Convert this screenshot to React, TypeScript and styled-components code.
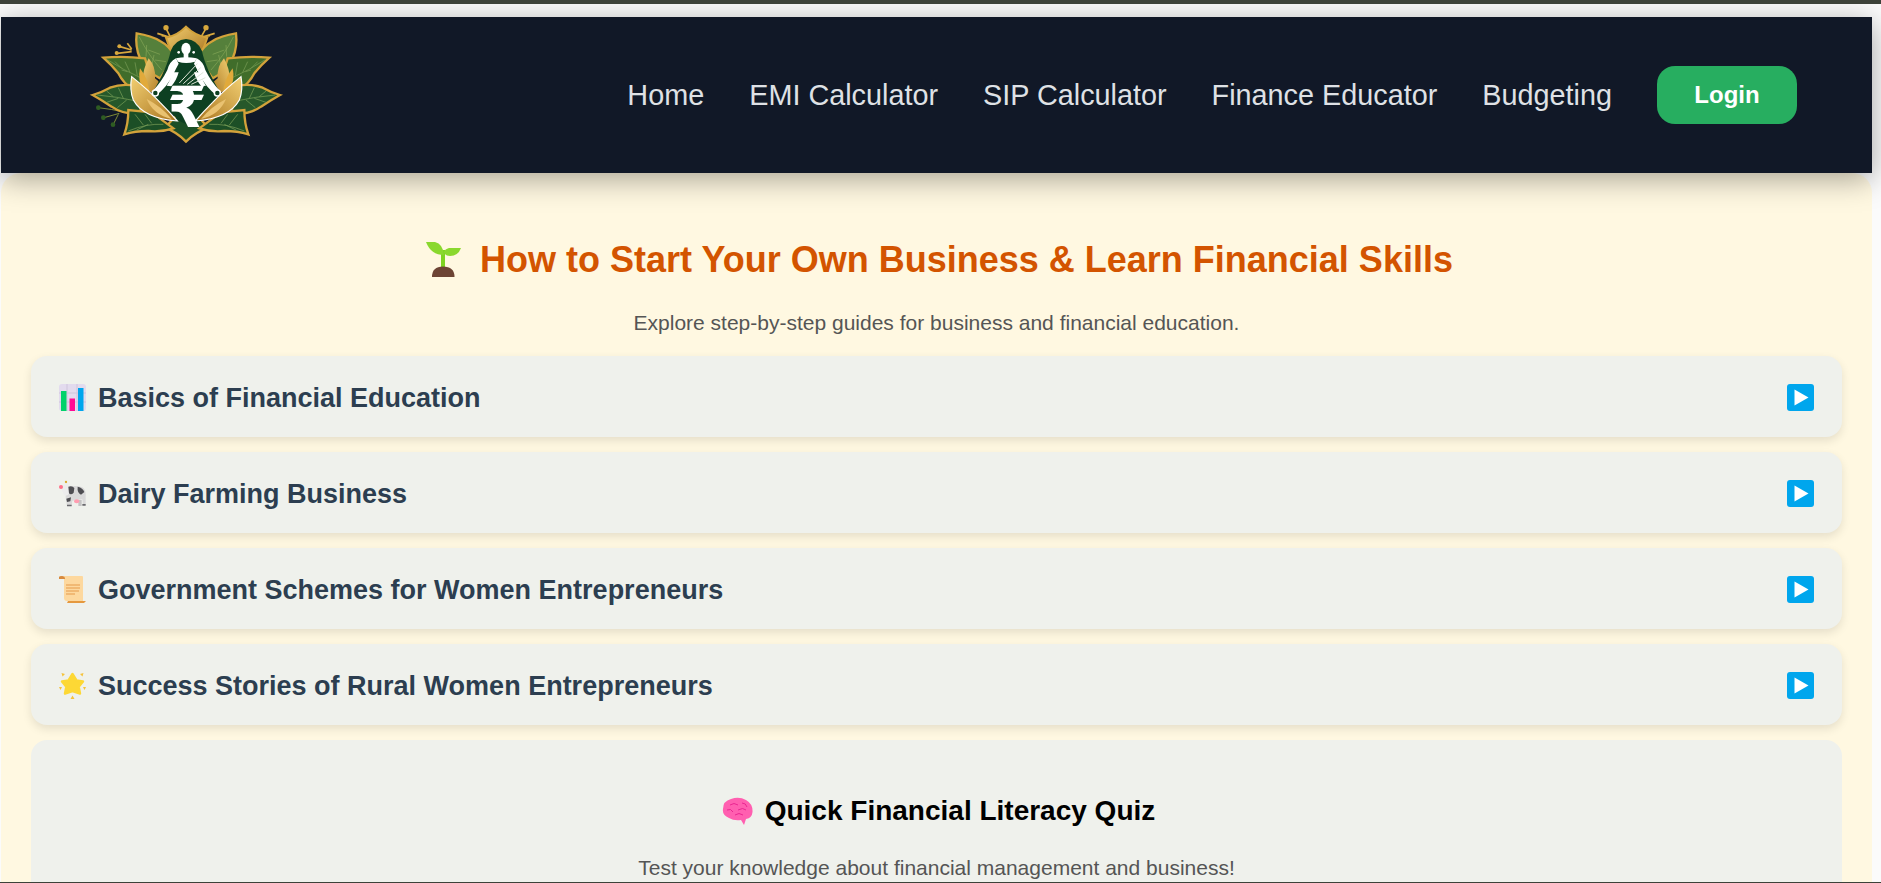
import React from 'react'
import styled, { createGlobalStyle } from 'styled-components'

const GlobalStyle = createGlobalStyle`
  html, body {
    margin: 0;
    padding: 0;
    height: 100%;
    overflow: hidden;
  }
  body {
    font-family: "Liberation Sans", Arial, sans-serif;
  }
`

// one side of the lotus, mirrored for the other side
const HalfLotus = () => (
  <g>
    {/* upper petal */}
    <path d="M170 55 Q215 62 240 78 Q268 92 285 125 L240 190 Q200 170 180 130 Q165 95 170 55 Z" fill="#54803a" stroke="#d3a23a" strokeWidth="7" />
    <path d="M178 66 Q205 120 245 165 M200 90 L198 125 M222 120 L216 150 M205 105 L240 118 M225 135 L258 140" fill="none" stroke="#86a659" strokeWidth="2" />
    {/* side petal */}
    <path d="M70 128 Q130 122 195 130 L215 195 L160 225 Q130 205 115 175 Q95 150 70 128 Z" fill="#3f6d2c" stroke="#d3a23a" strokeWidth="7" />
    <path d="M82 134 Q130 165 185 190 M105 140 L125 160 M135 140 L150 172 M165 142 L172 182 M125 165 L142 170" fill="none" stroke="#7d9e55" strokeWidth="2" />
    {/* low petal */}
    <path d="M38 240 Q65 232 90 218 Q125 205 165 212 L185 296 Q130 300 95 275 Q65 255 38 240 Z" fill="#26592a" stroke="#d3a23a" strokeWidth="7" />
    <path d="M52 240 Q110 245 170 258 M80 228 L100 245 M115 218 L130 250 M80 262 L115 250 M112 278 L140 255" fill="none" stroke="#7da35a" strokeWidth="2" />
    {/* bottom petal */}
    <path d="M133 358 Q145 325 145 285 L215 292 L280 340 Q245 352 205 348 Q165 348 133 358 Z" fill="#1f4f26" stroke="#d3a23a" strokeWidth="7" />
    <path d="M145 348 Q200 325 250 328 M165 298 L190 330 M195 298 L215 325 M170 345 L205 328" fill="none" stroke="#7da35a" strokeWidth="2" />
    {/* flame petals */}
    <path d="M206 130 Q228 155 225 190 Q250 205 245 245 L210 230 Q170 200 206 130 Z" fill="url(#logoGold)" />
    <path d="M180 160 Q205 190 210 240 L190 225 Q172 195 180 160 Z" fill="#e1aa3b" />
  </g>
)

// parts that lie over the dark centre
const HalfFigure = () => (
  <g>
    <path d="M155 185 Q205 225 240 262 Q268 290 292 318 Q190 310 160 255 Q148 225 155 185 Z" fill="url(#logoGold)" stroke="#fff" strokeWidth="3.5" />
    <path d="M200 252 Q245 275 275 312 Q220 300 200 252 Z" fill="#e9c271" />
    <path d="M288 130 Q268 140 262 165 Q245 200 218 228 L230 240 Q262 215 280 178 Q288 160 296 146 Z" fill="#fff" />
    <path d="M272 172 Q276 190 260 212 L274 214 Q290 195 296 172 Z" fill="#fff" />
    <circle cx="226" cy="234" r="9" fill="#0f4020" stroke="#fff" strokeWidth="4.5" />
  </g>
)

const BrandMark = () => (
  <svg width="210" height="130" viewBox="0 6 630 390" aria-label="logo">
    <defs>
      <linearGradient id="logoGold" x1="0" y1="0" x2="1" y2="1">
        <stop offset="0" stopColor="#f2cf72" />
        <stop offset="1" stopColor="#a8731e" />
      </linearGradient>
      <filter id="logoSoft">
        <feGaussianBlur stdDeviation="1" />
      </filter>
    </defs>
    <g filter="url(#logoSoft)">
      {/* sprigs */}
      <g stroke="#d8a83e" strokeWidth="5" fill="none">
        <path d="M272 68 L258 40 M272 68 L232 55 M272 66 L245 62" />
        <path d="M362 68 L378 40 M362 68 L404 55 M362 66 L390 62" />
        <path d="M155 110 L112 115 M155 105 L120 95 M155 102 L142 85" />
      </g>
      <circle cx="258" cy="38" r="8" fill="#d8a83e" />
      <circle cx="378" cy="38" r="8" fill="#d8a83e" />
      <circle cx="110" cy="114" r="6" fill="#d8a83e" />
      <circle cx="118" cy="94" r="6" fill="#d8a83e" />
      <g stroke="#7d8a35" strokeWidth="3" fill="none">
        <path d="M135 292 Q95 282 55 278 M118 295 L72 308 M115 298 L100 328" />
      </g>
      <circle cx="55" cy="278" r="7" fill="#2f5c22" />
      <circle cx="70" cy="308" r="7" fill="#2f5c22" />
      <circle cx="99" cy="329" r="7" fill="#2f5c22" />
      {/* top and bottom petals */}
      <path d="M318 35 Q292 62 258 68 L280 130 L360 130 L382 68 Q345 62 318 35 Z" fill="url(#logoGold)" stroke="#d3a23a" strokeWidth="6" />
      <path d="M318 380 Q292 352 255 338 L290 300 L350 300 L385 338 Q345 352 318 380 Z" fill="#1f4f26" stroke="#d3a23a" strokeWidth="7" />
      <HalfLotus />
      <g transform="translate(638 0) scale(-1 1)">
        <HalfLotus />
      </g>
      {/* dark centre */}
      <path d="M318 72 Q285 74 272 108 Q262 160 214 238 L298 318 L342 338 L348 316 L424 238 Q376 160 366 108 Q352 74 318 72 Z" fill="#0f4020" />
      <HalfFigure />
      <g transform="translate(638 0) scale(-1 1)">
        <HalfFigure />
      </g>
      {/* head and drape */}
      <ellipse cx="318" cy="101" rx="14" ry="18" fill="#fff" />
      <rect x="311" y="116" width="14" height="14" fill="#fff" />
      <circle cx="296" cy="112" r="4" fill="#fff" />
      <circle cx="341" cy="112" r="4" fill="#fff" />
      <path d="M288 130 Q318 124 350 130 L345 140 Q318 148 294 140 Z" fill="#fff" />
      <path d="M298 204 L352 146 M310 206 L362 158 M322 208 L370 172 M334 208 L376 188" stroke="#dfe7da" strokeWidth="3" fill="none" />
      <text x="321" y="335" textAnchor="middle" fontFamily='"DejaVu Sans", sans-serif' fontWeight="700" fontSize="170" fill="#fff">₹</text>
    </g>
  </svg>
)

const SproutIcon = () => (
  <svg width="36" height="36" viewBox="0 0 36 36">
    <rect x="15" y="8" width="4" height="18" fill="#7ed321" />
    <path d="M0 0 H9 Q17 2 18 13 Q5 13 0 0 Z" fill="#8ad82e" />
    <path d="M35 6 H23 Q19 7 18 10 Q19 14 24 14 Q32 14 35 6 Z" fill="#8ad82e" />
    <path d="M6 35 Q6 24.5 17 24.5 Q28.5 24.5 28.5 35 Z" fill="#6d4434" />
  </svg>
)

const ChartIcon = () => (
  <svg width="27" height="27" viewBox="0 0 27 27">
    <rect width="27" height="27" rx="3" fill="#e3dbee" />
    <path d="M0 9 H27 M0 18 H27 M8 0 V27 M18 0 V27" stroke="#cfc5dc" strokeWidth="1" />
    <rect x="2" y="7" width="5.5" height="20" fill="#00d26a" />
    <rect x="10.5" y="14.5" width="5.5" height="12.5" fill="#ff0a94" />
    <rect x="19" y="4" width="5.5" height="23" fill="#00a6ed" />
  </svg>
)

const CowIcon = () => (
  <svg width="27" height="27" viewBox="0 0 81 81">
    <path d="M22 22 Q50 14 70 22 Q82 30 80 50 L80 76 L72 76 L70 58 L40 62 L38 78 L24 78 L20 52 Z" fill="#d9d9d9" />
    <path d="M58 60 L68 60 L68 78 L58 78 Z" fill="#c4c4c4" />
    <path d="M4 18 L28 12 L32 38 Q24 50 16 46 L8 30 Z" fill="#ececec" />
    <path d="M28 20 Q40 16 46 24 L44 38 Q36 46 30 40 Z M56 20 Q72 24 76 36 L66 44 Q54 38 56 20 Z M22 56 L36 52 L34 64 L24 66 Z" fill="#4e4e52" />
    <path d="M24 74 H38 V79 H24 Z M70 72 H80 V77 H70 Z" fill="#6a6a6e" />
    <circle cx="6" cy="21" r="6" fill="#ff6f88" />
    <circle cx="21" cy="6" r="3.5" fill="#d8a82c" />
    <ellipse cx="53" cy="64" rx="8" ry="6" fill="#ff9db0" />
  </svg>
)

const ScrollIcon = () => (
  <svg width="27" height="27" viewBox="0 0 27 27">
    <path d="M5 0 H23 Q24 0 24 1 V25 H8 Q5 25 5 22 Z" fill="#fdd89e" />
    <path d="M0 1 Q0 0 3 0 Q6 0 6 3 H0 Z" fill="#d88a3c" />
    <path d="M9 25 H27 L25 27 H8 Z" fill="#e5993f" />
    <path d="M7 9 H21 M7 12 H21 M7 15 H20 M7 18 H16" stroke="#e59a4a" strokeWidth="1.2" />
  </svg>
)

const StarIcon = () => (
  <svg width="27" height="27" viewBox="0 0 27 27">
    <path d="M13.5 2 L17.5 8.5 L24 9.5 L19.7 14.7 L21 21.5 L13.5 19 L6 21.5 L7.3 14.7 L3 9.5 L9.5 8.5 Z" fill="#fdd835" stroke="#fdd835" strokeWidth="2.4" strokeLinejoin="round" />
    <path d="M2.5 1 L6 2 L3.5 4.5 Z M24.5 1 L21 2 L23.5 4.5 Z M0 15 L3 15 L1.5 18 Z M27 15 L24 15 L25.5 18 Z M13.5 23.5 L15.5 27 H11.5 Z" fill="#f5c33b" />
  </svg>
)

const BrainIcon = () => (
  <svg width="31" height="28" viewBox="0 0 31 28">
    <path d="M1 12 Q1 4 9 2 Q17 -1 24 3 Q31 7 30.5 15 Q30 21 24 22 L22 28 L19 23 Q12 24 7 21 Q0 18 1 12 Z" fill="#ff5fb0" />
    <path d="M8 8 Q12 5 16 8 M5 13 Q9 11 11 15 M16 13 Q21 10 24 13 M13 18 Q17 15 21 18 M20 6 Q24 6 25 10" fill="none" stroke="#e5188a" strokeWidth="0.8" />
  </svg>
)

const PlayIcon = () => (
  <svg width="27" height="27" viewBox="0 0 27 27">
    <rect width="27" height="27" rx="3" fill="#00a6ed" />
    <path d="M7.5 5.5 L21.5 13.5 L7.5 21.5 Z" fill="#fff" />
  </svg>
)

const Frame = styled.div`
  height: 100vh;
  box-sizing: border-box;
  display: flex;
  flex-direction: column;
  border-top: 4px solid #3d4239;
  border-bottom: 1px solid #3d4239;
  padding: 13px 9px 0 1px;
  background: #fbfbfb;
  overflow: hidden;
`

const TopNav = styled.nav`
  position: relative;
  z-index: 1;
  flex: 0 0 156px;
  display: flex;
  align-items: center;
  justify-content: space-between;
  padding: 0 75px 0 79px;
  background: #111827;
  box-shadow: 0 6px 28px rgba(0, 0, 0, 0.35);
`

const LogoLink = styled.a`
  align-self: flex-start;
  display: block;
  height: 130px;
`

const NavLinks = styled.div`
  display: flex;
  align-items: center;
  gap: 45px;
`

const NavLink = styled.a`
  font-size: 28.8px;
  line-height: 32px;
  color: #dfe1e5;
`

const LoginButton = styled.button`
  width: 140px;
  height: 58px;
  border: 0;
  border-radius: 18px;
  background: #27ae60;
  color: #fff;
  font-family: inherit;
  font-size: 24px;
  font-weight: 700;
`

const Content = styled.main`
  flex: 1;
  min-height: 0;
  box-sizing: border-box;
  padding: 0 30px;
  background: #fff8e1;
  border-radius: 20px 20px 0 0;
`

const PageTitle = styled.h1`
  margin: 0;
  padding: 65px 0 0 6px;
  display: flex;
  justify-content: center;
  align-items: center;
  gap: 18px;
  font-size: 36px;
  line-height: 44px;
  font-weight: 700;
  color: #d35400;
`

const PageSubtitle = styled.p`
  margin: 29px 0 0;
  text-align: center;
  font-size: 21px;
  line-height: 24px;
  color: #555;
`

const CardStack = styled.div`
  margin-top: 21px;
  display: flex;
  flex-direction: column;
  gap: 15px;
`

const TopicCard = styled.section`
  height: 81px;
  box-sizing: border-box;
  display: flex;
  align-items: center;
  justify-content: space-between;
  padding: 2px 28px 0 28px;
  background: #eff1ec;
  border-radius: 16px;
  box-shadow: 0 4px 10px rgba(0, 0, 0, 0.1);
`

const TopicTitle = styled.h2`
  margin: 0;
  display: flex;
  align-items: center;
  gap: 12px;
  font-size: 27px;
  font-weight: 700;
  color: #2c3e50;
`

const TopicLabel = styled.span`
  padding-top: 2px;
`

const QuizCard = styled.section`
  padding: 53px 0 40px;
  background: #eff1ec;
  border-radius: 16px;
  text-align: center;
`

const QuizTitle = styled.h2`
  margin: 0;
  padding-left: 4px;
  display: flex;
  justify-content: center;
  align-items: center;
  gap: 12px;
  font-size: 28px;
  line-height: 36px;
  font-weight: 700;
  color: #000;
`

const QuizText = styled.p`
  margin: 27px 0 0;
  font-size: 21px;
  line-height: 24px;
  color: #555;
`

const links = ['Home', 'EMI Calculator', 'SIP Calculator', 'Finance Educator', 'Budgeting']

const topics = [
  { icon: <ChartIcon />, title: 'Basics of Financial Education' },
  { icon: <CowIcon />, title: 'Dairy Farming Business' },
  { icon: <ScrollIcon />, title: 'Government Schemes for Women Entrepreneurs' },
  { icon: <StarIcon />, title: 'Success Stories of Rural Women Entrepreneurs' },
]

const App: React.FC = () => {
  return (
    <Frame>
      <GlobalStyle />
      <TopNav>
        <LogoLink>
          <BrandMark />
        </LogoLink>
        <NavLinks>
          {links.map((link) => (
            <NavLink key={link}>{link}</NavLink>
          ))}
          <LoginButton>Login</LoginButton>
        </NavLinks>
      </TopNav>
      <Content>
        <PageTitle>
          <SproutIcon />
          How to Start Your Own Business &amp; Learn Financial Skills
        </PageTitle>
        <PageSubtitle>Explore step-by-step guides for business and financial education.</PageSubtitle>
        <CardStack>
          {topics.map((topic) => (
            <TopicCard key={topic.title}>
              <TopicTitle>
                {topic.icon}
                <TopicLabel>{topic.title}</TopicLabel>
              </TopicTitle>
              <PlayIcon />
            </TopicCard>
          ))}
          <QuizCard>
            <QuizTitle>
              <BrainIcon />
              Quick Financial Literacy Quiz
            </QuizTitle>
            <QuizText>Test your knowledge about financial management and business!</QuizText>
          </QuizCard>
        </CardStack>
      </Content>
    </Frame>
  )
}

export default App
